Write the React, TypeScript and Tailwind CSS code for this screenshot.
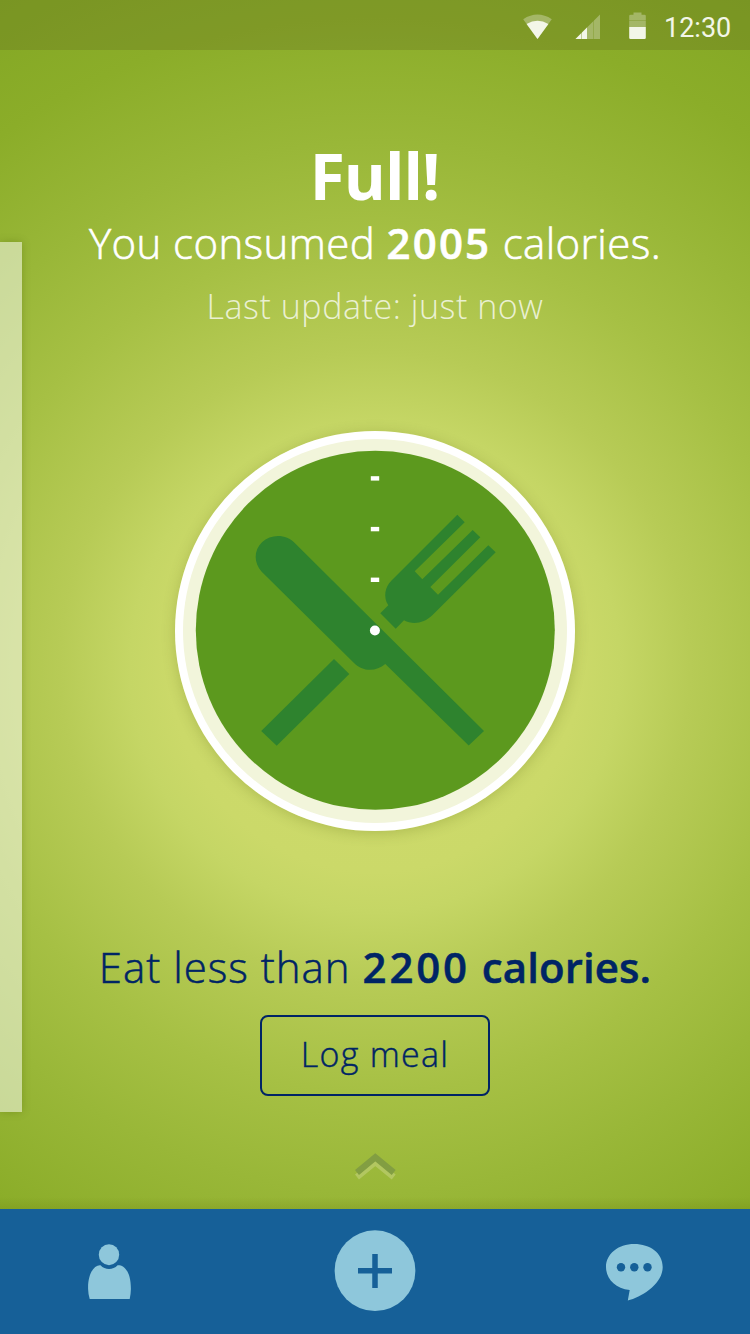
const ticks = [476.2, 526.9, 577.6]

function StatusBar() {
    return (
        <header className="flex h-[50px] shrink-0 items-center bg-[#5c5f20]/25">
            <svg className="ml-[523px] h-[50px] w-[30px]" viewBox="523 0 30 50">
                <path d="M523.2 19.2Q537.5 10 551.8 19.2L537.5 39Z" fill="#fff" fillOpacity=".3" />
                <path d="M526.6 24Q537.5 17.6 548.4 24L537.5 39Z" fill="#f3f6e8" />
            </svg>
            <svg className="ml-[21px] h-[50px] w-[28px]" viewBox="574 0 28 50">
                <path d="M600 14.5V39H575.5Z" fill="#fff" fillOpacity=".3" />
                <path d="M587 27.5V39H575.5Z" fill="#f3f6e8" />
                <path d="M581.5 32V39M593.5 20V39" stroke="#7b9723" strokeOpacity=".4" strokeWidth="1" />
            </svg>
            <svg className="ml-[26px] h-[50px] w-[20px]" viewBox="628 0 20 50">
                <path d="M633.5 12.5h8v2.3h3a1.3 1.3 0 0 1 1.3 1.3V27h-16.6V16.1a1.3 1.3 0 0 1 1.3-1.3h3Z" fill="#fff" fillOpacity=".3" />
                <path d="M629.2 27h16.6v10.7a1.3 1.3 0 0 1-1.3 1.3h-14a1.3 1.3 0 0 1-1.3-1.3Z" fill="#f3f6e8" />
                <path d="M629 20.5h17" stroke="#7b9723" strokeOpacity=".4" />
            </svg>
            <span className="ml-[16px] mt-[6px] whitespace-nowrap font-[Roboto] text-[27px] leading-none text-[#f3f6e8]">12:30</span>
        </header>
    )
}

function Dial() {
    return (
        <div className="mt-[101px] size-[400px] shrink-0 rounded-full shadow-[0_2px_14px_rgba(70,80,0,0.22)]">
            <svg className="block size-full" viewBox="175 431 400 400">
                <circle cx="375" cy="631" r="200" fill="#fff" />
                <circle cx="375" cy="631" r="192" fill="#f2f5db" />
                <circle cx="375.3" cy="630.3" r="179.5" fill="#5c991e" />
                {/* cutlery */}
                <g fill="#2e832e">
                    <path d="M261.7 571.7C253.5 563 253.7 550 262 542.2C271 534 286 533.8 295 543.3L484 731L468.7 745.5L385.3 664C376 672 362.5 672 353.5 662.5Z" />
                    <path d="M334 659L349.3 674L276.7 745.7L261.2 731Z" />
                    <path d="M457.3 514.7L464.7 522.3L414.7 571.3L422.3 579.3L472.7 530L480.3 537.3L430.3 587L438 594.7L488.3 545.3L495.7 552.3L432.3 615.3C424 623.3 413 625.3 404 620.3L395.7 628.7L380.3 613.3L388.3 605.3C383 597 385 587 391.3 580.7Z" />
                </g>
                {ticks.map((y) => (
                    <rect key={y} x="370.8" y={y} width="8.4" height="4.4" fill="#fff" />
                ))}
                <circle cx="374.9" cy="630.5" r="5" fill="#fff" />
            </svg>
        </div>
    )
}

function BottomNav() {
    return (
        <nav className="flex h-[125px] shrink-0 items-start bg-[#166098] pt-[21px]">
            <button className="ml-[87px] mt-[14px]" aria-label="Profile">
                <svg className="block h-[56px] w-[45px]" viewBox="87 1244 45 56" fill="#8ec7db">
                    <ellipse cx="109" cy="1254.7" rx="10.2" ry="10.5" />
                    <path d="M100.5 1265.2C105 1270.3 113 1270.3 117.6 1265.2C123 1264.6 131 1270 130.9 1289Q130.8 1294 129.7 1299H89.7Q88.2 1294 88.1 1289C87.7 1274 94 1264.6 100.5 1265.2Z" />
                </svg>
            </button>
            <button className="ml-[202px]" aria-label="Add">
                <svg className="block size-[82px]" viewBox="334 1230 82 82">
                    <circle cx="375" cy="1270.7" r="40.4" fill="#8ec7db" />
                    <path d="M375 1254V1288M358 1270.8H392" stroke="#166098" strokeWidth="5.5" />
                </svg>
            </button>
            <button className="ml-[189px] mt-[13px]" aria-label="Messages">
                <svg className="block h-[59px] w-[59px]" viewBox="605 1243 59 59">
                    <path d="M634.3 1244C650 1244 662.7 1253 662.7 1267C662.7 1284 642 1297 627.8 1300.5L629.7 1290C615 1288.5 606 1278.5 606 1267C606 1254 618 1244 634.3 1244Z" fill="#8ec7db" />
                    <g fill="#166098">
                        <circle cx="621" cy="1267.2" r="4.2" />
                        <circle cx="634.3" cy="1267.2" r="4.2" />
                        <circle cx="647.5" cy="1267.2" r="4.2" />
                    </g>
                </svg>
            </button>
        </nav>
    )
}

export default function App() {
    return (
        <div className="relative flex h-[1334px] w-[750px] flex-col overflow-hidden bg-[radial-gradient(circle_at_375px_667px,#d0db6d_0px,#cbd969_205px,#c5d665_245px,#b7cb56_315px,#a6c044_425px,#99b738_525px,#8bad29_650px,#83a724_765px)] font-['Open_Sans',sans-serif]">
            <StatusBar />

            {/* edge of the previous card */}
            <div className="absolute left-0 top-[242px] h-[870px] w-[22px] bg-[#fff]/50 shadow-[0_0_8px_rgba(70,90,0,0.3)]" />

            <main className="flex flex-1 flex-col items-center whitespace-nowrap">
                <h1 className="mt-[90px] pr-[1px] text-[64px] font-bold leading-[72px] tracking-[-1px] text-white">Full!</h1>
                <p className="mt-[3px] text-[42px] font-light leading-[56px] tracking-[0.4px] text-white [-webkit-text-stroke:0.6px]">
                    You consumed <b className="font-semibold tracking-[2.2px]">2005</b> calories.
                </p>
                <p className="mt-[11px] text-[34px] font-light leading-[48px] tracking-[0.55px] text-white/75">Last update: just now</p>
                <Dial />
                <p className="mt-[108px] text-[42px] font-light leading-[56px] tracking-[1px] text-[#002465] [-webkit-text-stroke:0.5px]">
                    Eat less than{' '}
                    <b className="font-semibold">
                        <span className="tracking-[2.8px]">2200</span> <span className="tracking-[0.1px]">calories.</span>
                    </b>
                </p>
                <button className="mt-[20px] flex h-[81px] w-[230px] items-center justify-center rounded-[8px] border-2 border-[#002465] pb-[2px] text-[34px] font-light tracking-[1.3px] text-[#002465] [-webkit-text-stroke:0.4px]">
                    Log meal
                </button>
                <svg className="mt-[56px] h-[30px] w-[44px] shrink-0" viewBox="353 1152 44 30" fill="none" strokeWidth="6.2">
                    <path d="M357 1177L375.3 1162L393.7 1177" stroke="#bccd70" strokeOpacity=".7" />
                    <path d="M357 1172.5L375.3 1157.3L393.7 1172.5" stroke="#829e42" />
                </svg>
                <div className="mt-auto h-[12px] w-full bg-gradient-to-b from-transparent to-[#6b8010]/25" />
            </main>

            <BottomNav />
        </div>
    )
}
